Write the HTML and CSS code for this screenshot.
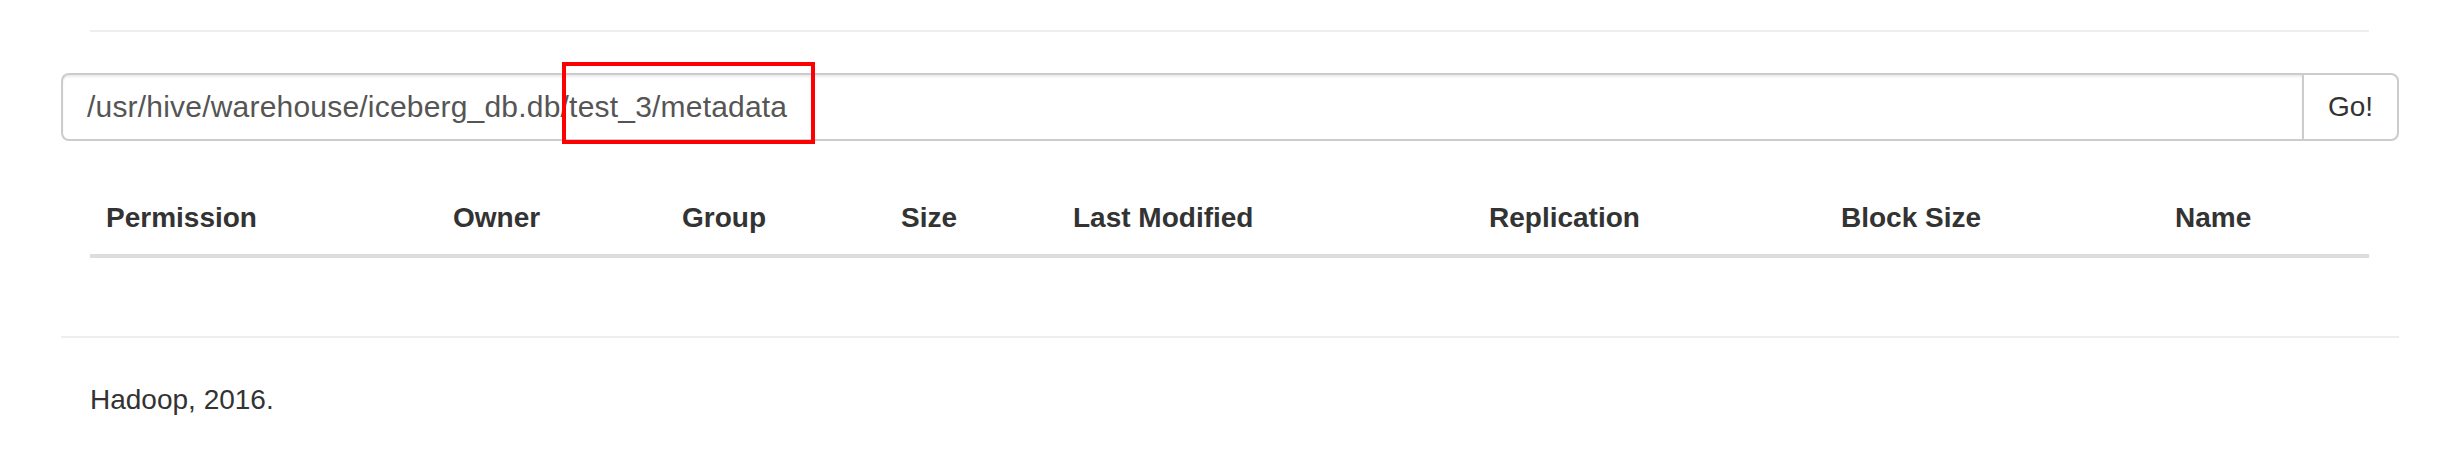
FILE: index.html
```html
<!DOCTYPE html>
<html lang="en">
<head>
<meta charset="utf-8">
<title>Browse Directory</title>
<link rel="stylesheet" href="styles.css">
</head>
<body>
<div class="page">
  <div class="rule-top"></div>
  <div class="search">
    <input class="path" type="text" value="/usr/hive/warehouse/iceberg_db.db/test_3/metadata">
    <button class="go" type="button">Go!</button>
    <div class="mark"></div>
  </div>
  <table class="listing">
    <colgroup>
      <col class="c-perm">
      <col class="c-owner">
      <col class="c-group">
      <col class="c-size">
      <col class="c-mod">
      <col class="c-rep">
      <col class="c-block">
      <col class="c-name">
    </colgroup>
    <thead>
      <tr>
        <th>Permission</th>
        <th>Owner</th>
        <th>Group</th>
        <th>Size</th>
        <th>Last Modified</th>
        <th>Replication</th>
        <th>Block Size</th>
        <th>Name</th>
      </tr>
    </thead>
    <tbody></tbody>
  </table>
  <div class="rule-foot"></div>
  <footer class="foot">Hadoop, 2016.</footer>
</div>
</body>
</html>
```

FILE: styles.css
```css
html, body {
  margin: 0;
  padding: 0;
  background: #fff;
}

body {
  font-family: "Liberation Sans", Arial, Helvetica, sans-serif;
  color: #333;
  font-size: 28px;
}

.page {
  margin-left: 61px;
  width: 2338px;
  padding-top: 30px;
}

.rule-top {
  height: 2px;
  background: #eee;
  margin: 0 30px 0 29px;
}

.search {
  position: relative;
  display: flex;
  margin-top: 41px;
  height: 68px;
}

.path {
  flex: 1;
  min-width: 0;
  box-sizing: border-box;
  height: 68px;
  margin: 0;
  border: 2px solid #ccc;
  border-right: 0;
  border-radius: 8px 0 0 8px;
  padding: 0 24px;
  font-family: "Liberation Sans", Arial, Helvetica, sans-serif;
  font-size: 30px;
  letter-spacing: 0.2px;
  color: #555;
  background: #fff;
  box-shadow: inset 0 2px 2px rgba(0, 0, 0, 0.075);
  outline: none;
}

.go {
  flex: 0 0 97px;
  box-sizing: border-box;
  height: 68px;
  margin: 0;
  padding: 0;
  border: 2px solid #ccc;
  border-radius: 0 8px 8px 0;
  background: #fff;
  color: #333;
  font-family: "Liberation Sans", Arial, Helvetica, sans-serif;
  font-size: 28px;
  line-height: 40px;
}

.mark {
  position: absolute;
  left: 501px;
  top: -11px;
  width: 253px;
  height: 82px;
  box-sizing: border-box;
  border: 4px solid #ff0000;
  pointer-events: none;
}

.listing {
  margin: 41px 0 0 29px;
  width: 2279px;
  table-layout: fixed;
  border-collapse: separate;
  border-spacing: 0;
}

.c-perm { width: 347px; }
.c-owner { width: 229px; }
.c-group { width: 219px; }
.c-size { width: 172px; }
.c-mod { width: 416px; }
.c-rep { width: 352px; }
.c-block { width: 334px; }
.c-name { width: 210px; }

.listing th {
  text-align: left;
  vertical-align: bottom;
  padding: 16px;
  line-height: 40px;
  font-size: 28px;
  font-weight: bold;
  color: #333;
  border-bottom: 4px solid #ddd;
  white-space: nowrap;
}

.rule-foot {
  height: 2px;
  background: #eee;
  margin-top: 78px;
}

.foot {
  margin-top: 42px;
  padding-left: 29px;
  line-height: 40px;
  font-size: 28px;
  color: #333;
}
```
